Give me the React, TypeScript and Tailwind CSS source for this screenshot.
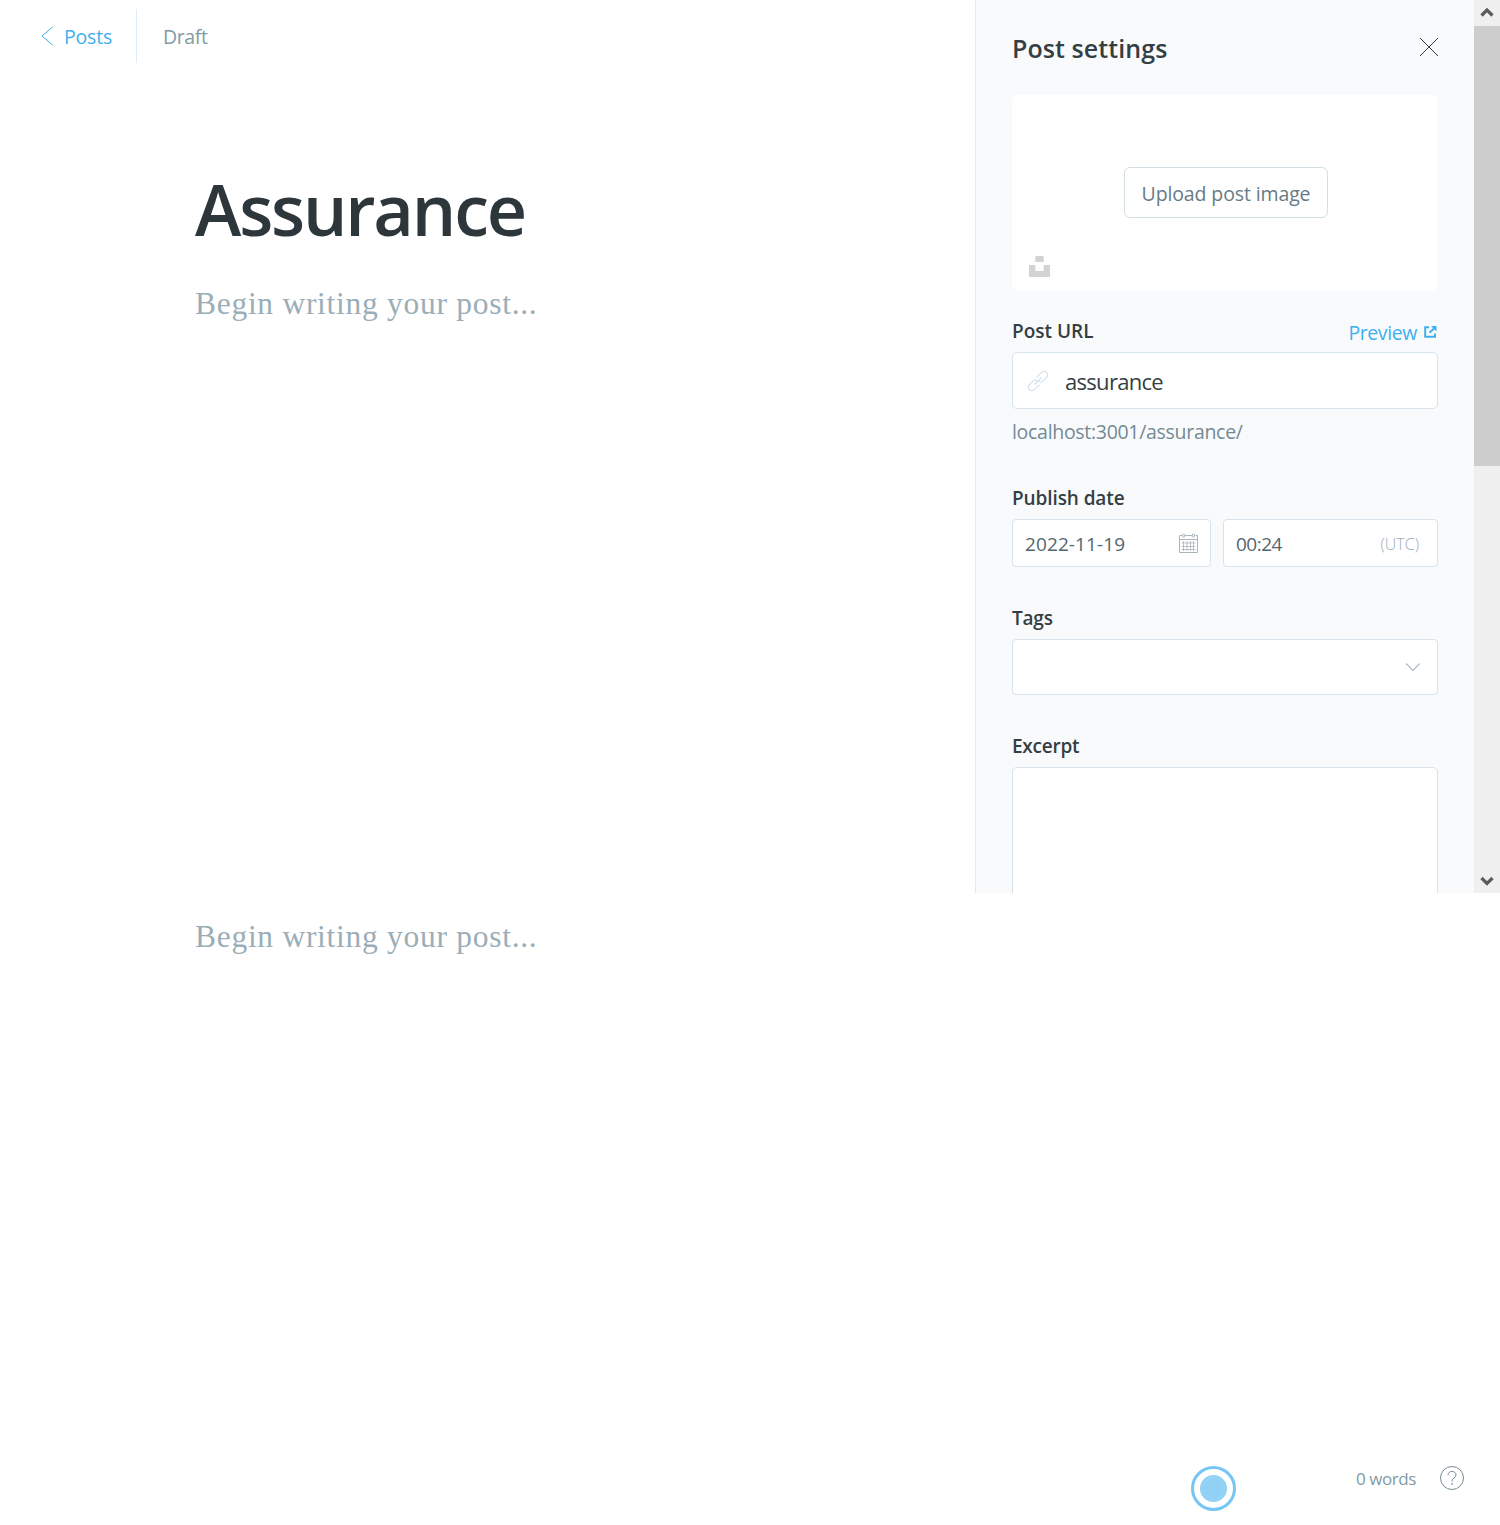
import React from "react";

function Label({ children, className = "" }: { children: React.ReactNode; className?: string }) {
  return <div className={`h-[26px] text-[19px] leading-[26px] font-semibold text-[#343f44] whitespace-nowrap ${className}`}>{children}</div>;
}

function TopBar() {
  return (
    <header className="flex h-[72px] items-center pl-[41px]">
      <a className="flex items-center text-[19.5px] leading-[26px] text-[#3eb0ef]">
        <svg width="12" height="20" viewBox="0 0 12 20" fill="none" stroke="#3eb0ef" strokeWidth="1">
          <path d="M11.5 1 L1 10 L11.5 19" />
        </svg>
        <span className="mt-[2px] ml-[11px] w-[72px] tracking-[-0.2px] whitespace-nowrap">Posts</span>
      </a>
      <div className="h-[54px] w-px bg-[#dfebf5]" />
      <span className="mt-[2px] ml-[26px] text-[19.5px] leading-[26px] tracking-[-0.4px] text-[#819ba5]">Draft</span>
    </header>
  );
}

function Placeholder() {
  return (
    <p className="h-10 font-['Liberation_Serif',serif] text-[31.5px] leading-10 tracking-[0.72px] whitespace-nowrap text-[#9baeb8]">
      Begin writing your post...
    </p>
  );
}

function LinkIcon() {
  return (
    <svg width="20" height="20" viewBox="0 0 20 20" fill="none" stroke="#ccdce8" strokeWidth="1">
      <g transform="rotate(-45 10 10)">
        <path d="M8.5 13.5 H1.5 A3.5 3.5 0 0 1 1.5 6.5 H6.5 A3 3 0 0 1 9.5 9.5" />
        <path d="M11.5 6.5 H18.5 A3.5 3.5 0 0 1 18.5 13.5 H13.5 A3 3 0 0 1 10.5 10.5" />
        <path d="M5 10 H15" />
      </g>
    </svg>
  );
}

function CalendarIcon() {
  return (
    <svg width="20" height="20" viewBox="0 0 20 20" fill="none" stroke="#a9b5bb" strokeWidth="1">
      <path d="M3 2.5 H0.5 V19.5 H18.5 V2.5 H16.5 M6 2.5 H13.5 M0.5 6.5 H18.5" />
      <rect x="3.5" y="1" width="2.2" height="3.2" rx="1" />
      <rect x="13.3" y="1" width="2.2" height="3.2" rx="1" />
      <path d="M2.5 10 H16.5 M2.5 13.5 H16.5 M2.5 16.5 H16.5 M4.5 8 V18 M8 8 V18 M11.5 8 V18 M14.5 8 V18" strokeWidth="0.8" />
    </svg>
  );
}

function SettingsPanel() {
  return (
    <aside className="h-[893px] w-[499px] overflow-hidden border-l border-[#dfebf1] bg-[#f9fafc] pr-[36px] pl-[36px]">
      <div className="flex h-[95px] items-start justify-between">
        <h2 className="mt-[31px] text-[25px] leading-[35px] font-semibold tracking-[0.08px] whitespace-nowrap text-[#343f44]">Post settings</h2>
        <svg className="mt-[37px] -mr-px" width="20" height="20" viewBox="0 0 20 20" fill="none" stroke="#343f44">
          <path d="M1 1 L19 19 M19 1 L1 19" />
        </svg>
      </div>
      <div className="flex h-[195px] flex-col rounded-[5px] bg-white">
        <button className="mt-[72px] ml-[112px] h-[51px] w-[204px] rounded-[6px] border border-[#d3dfe4] pt-[2px] text-[19.5px] tracking-[-0.12px] whitespace-nowrap text-[#667b85]">
          Upload post image
        </button>
        <svg className="mt-[38px] ml-[17px]" width="21" height="21" viewBox="0 0 21 21" fill="#d3d3d3">
          <path d="M6.3 0 H14.7 V6 H6.3 Z M0 9 H6.3 V15 H14.7 V9 H21 V21 H0 Z" />
        </svg>
      </div>
      <div className="mt-[28px] flex h-[34px] justify-between">
        <Label>Post URL</Label>
        <a className="mt-[2px] flex text-[19.5px] leading-[26px] tracking-[-0.4px] text-[#3eb0ef]">
          Preview
          <svg className="mt-[6px] mr-px ml-[7px]" width="13" height="12" viewBox="0 0 13 12" fill="none" stroke="#3eb0ef" strokeWidth="2">
            <path d="M5 1.3 H1.2 V10.8 H11 V7.5 M5.5 6.7 L10 2.5" />
            <path d="M7 0 H12.5 V5.5 Z" fill="#3eb0ef" stroke="none" />
          </svg>
        </a>
      </div>
      <div className="flex h-[57px] items-center rounded-[5px] border border-[#d7e4ec] bg-white pl-[15px]">
        <LinkIcon />
        <span className="ml-[17px] text-[22px] leading-[30px] tracking-[-0.7px] text-[#343f44]">assurance</span>
      </div>
      <div className="mt-[10px] h-[26px] text-[19.5px] leading-[26px] tracking-[-0.3px] whitespace-nowrap text-[#738a94]">localhost:3001/assurance/</div>
      <Label className="mt-[40px] tracking-[-0.1px]">Publish date</Label>
      <div className="mt-[8px] flex h-[48px] gap-3 text-[19px] text-[#54666d]">
        <div className="flex w-[199px] items-center justify-between rounded-[4px] border border-[#d7e4ec] bg-white pr-[11px] pl-[12px]">
          <span className="mt-[3px] tracking-[0.1px] whitespace-nowrap">2022-11-19</span>
          <CalendarIcon />
        </div>
        <div className="flex flex-1 items-center justify-between rounded-[4px] border border-[#d7e4ec] bg-white pr-[18px] pl-[12px]">
          <span className="mt-[3px] tracking-[-0.5px]">00:24</span>
          <span className="mt-[2px] text-[16px] font-light text-[#9baeb8]">(UTC)</span>
        </div>
      </div>
      <Label className="mt-[38px] tracking-[-0.2px]">Tags</Label>
      <div className="mt-[8px] flex h-[56px] items-center justify-end rounded-[4px] border border-[#d7e4ec] bg-white pr-[17px]">
        <svg width="15" height="9" viewBox="0 0 15 9" fill="none" stroke="#a9bac4" strokeWidth="1.1">
          <path d="M1 0.5 L8 7.5 L15 0.5" />
        </svg>
      </div>
      <Label className="mt-[38px] tracking-[-0.25px]">Excerpt</Label>
      <div className="mt-[8px] h-[160px] rounded-[5px] border border-[#d7e4ec] bg-white" />
    </aside>
  );
}

function Scrollbar() {
  return (
    <div className="flex h-[893px] w-[26px] flex-col items-center bg-[#f0f0f0]">
      <svg width="26" height="26" viewBox="0 0 26 26" fill="none" stroke="#5c5c5c" strokeWidth="3.2">
        <path d="M7.5 15.5 L13 10 L18.5 15.5" />
      </svg>
      <div className="h-[440px] w-full bg-[#cdcdcd]" />
      <svg className="mt-auto" width="26" height="26" viewBox="0 0 26 26" fill="none" stroke="#5c5c5c" strokeWidth="3.2">
        <path d="M7.5 11 L13 16.5 L18.5 11" />
      </svg>
    </div>
  );
}

function StatusBar() {
  return (
    <footer className="mt-auto mb-[13px] flex h-[46px] pl-[1191px]">
      <svg width="46" height="46" viewBox="0 0 46 46">
        <circle cx="22.5" cy="22.5" r="21" fill="#fff" stroke="#76c6f5" strokeWidth="3" />
        <circle cx="22.5" cy="22.5" r="13.5" fill="#90d1f5" />
        <circle cx="22.5" cy="22.5" r="11" fill="none" stroke="#a3d8f6" strokeWidth="0.7" />
      </svg>
      <span className="mt-[1px] ml-[119px] w-[84px] text-[17px] leading-[24px] tracking-[-0.45px] whitespace-nowrap text-[#819ba5]">0 words</span>
      <svg width="25" height="25" viewBox="0 0 25 25" fill="none" stroke="#738a94" strokeWidth="1">
        <circle cx="12" cy="12" r="11.5" />
        <path d="M8 9.2 C8 4.2 16 4.2 16 9 C16 12 12 11.8 12 15.4" />
        <circle cx="12" cy="18" r="0.5" />
      </svg>
    </footer>
  );
}

export default function App() {
  return (
    <div className="flex h-[1525px] w-[1500px] flex-col overflow-hidden bg-white font-['Open_Sans',sans-serif]">
      <div className="flex h-[893px]">
        <main className="w-[975px]">
          <TopBar />
          <div className="pt-[87px] pl-[195px]">
            <h1 className="h-[100px] text-[70px] leading-[100px] font-semibold tracking-[-2.15px] whitespace-nowrap text-[#2c363b]">Assurance</h1>
            <div className="mt-[25px]"><Placeholder /></div>
          </div>
        </main>
        <SettingsPanel />
        <Scrollbar />
      </div>
      <div className="mt-[24px] pl-[195px]"><Placeholder /></div>
      <StatusBar />
    </div>
  );
}
